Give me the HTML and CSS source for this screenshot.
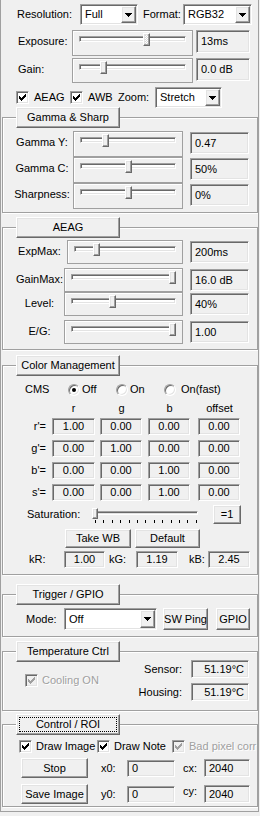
FILE: index.html
```html
<!DOCTYPE html>
<html lang="en">
<head>
<meta charset="utf-8">
<title>Camera Control</title>
<link rel="stylesheet" href="styles.css">
</head>
<body>
<svg class="defs" width="0" height="0" aria-hidden="true">
  <symbol id="chk" viewBox="0 0 7 7"><path d="M6 0h1v1h-1zM5 1h2v1h-2zM0 2h1v1h-1zM4 2h3v1h-3zM0 3h2v1h-2zM3 3h3v1h-3zM0 4h5v1h-5zM1 5h3v1h-3zM2 6h1v1h-1z"/></symbol>
  <symbol id="arr" viewBox="0 0 7 4"><path d="M0 0h7v1h-1v1h-1v1h-1v1h-1v-1h-1v-1h-1v-1h-1z"/></symbol>
</svg>
<div class="win">
  <div class="top">
    <div class="row r-res">
      <span class="w-res">Resolution:</span>
      <div class="combo cw58"><span class="ctext">Full</span><span class="cbtn"><svg width="7" height="4"><use href="#arr"/></svg></span></div>
      <span class="w-fmt">Format:</span>
      <div class="combo cw69"><span class="ctext">RGB32</span><span class="cbtn"><svg width="7" height="4"><use href="#arr"/></svg></span></div>
    </div>
    <div class="srow r-exp">
      <span class="slbl tl">Exposure:</span>
      <div class="frame tf h26"><div class="track"><span class="thumb focus" style="left:63px"></span></div></div>
      <div class="edit tv">13ms</div>
    </div>
    <div class="srow r-gain">
      <span class="slbl tl">Gain:</span>
      <div class="frame tf h25"><div class="track"><span class="thumb" style="left:20px"></span></div></div>
      <div class="edit tv">0.0 dB</div>
    </div>
    <div class="row r-chk">
      <label class="ck cw-aeag"><span class="box"><svg width="7" height="7"><use href="#chk"/></svg></span>AEAG</label>
      <label class="ck cw-awb"><span class="box"><svg width="7" height="7"><use href="#chk"/></svg></span>AWB</label>
      <span class="cw-zoom">Zoom:</span>
      <div class="combo cw67"><span class="ctext">Stretch</span><span class="cbtn"><svg width="7" height="4"><use href="#arr"/></svg></span></div>
    </div>
  </div>

  <fieldset class="grp g-gamma">
    <legend class="gbtn"><span class="gtext">Gamma &amp; Sharp</span></legend>
    <div class="srow grow">
      <span class="slbl gl">Gamma Y:</span>
      <div class="frame gf"><div class="track"><span class="thumb" style="left:21px"></span></div></div>
      <div class="edit gv">0.47</div>
    </div>
    <div class="srow grow">
      <span class="slbl gl">Gamma C:</span>
      <div class="frame gf"><div class="track"><span class="thumb" style="left:44px"></span></div></div>
      <div class="edit gv">50%</div>
    </div>
    <div class="srow grow">
      <span class="slbl gl">Sharpness:</span>
      <div class="frame gf"><div class="track"><span class="thumb" style="left:44px"></span></div></div>
      <div class="edit gv">0%</div>
    </div>
  </fieldset>

  <fieldset class="grp g-aeag">
    <legend class="gbtn"><span class="gtext">AEAG</span></legend>
    <div class="srow arow a1">
      <span class="slbl al">ExpMax:</span>
      <div class="frame af narrow"><div class="track"><span class="thumb" style="left:18px"></span></div></div>
      <div class="edit av">200ms</div>
    </div>
    <div class="srow arow a2">
      <span class="slbl al">GainMax:</span>
      <div class="frame af"><div class="track"><span class="thumb" style="left:97px"></span></div></div>
      <div class="edit av">16.0 dB</div>
    </div>
    <div class="srow arow a3">
      <span class="slbl al">Level:</span>
      <div class="frame af"><div class="track"><span class="thumb" style="left:37px"></span></div></div>
      <div class="edit av">40%</div>
    </div>
    <div class="srow arow a4">
      <span class="slbl al">E/G:</span>
      <div class="frame af"><div class="track"><span class="thumb" style="left:97px"></span></div></div>
      <div class="edit av">1.00</div>
    </div>
  </fieldset>

  <fieldset class="grp g-color">
    <legend class="gbtn"><span class="gtext">Color Management</span></legend>
    <div class="row cmsrow">
      <span class="w-cms">CMS</span>
      <label class="ri"><span class="rad on"></span>Off</label>
      <label class="ri"><span class="rad"></span>On</label>
      <label class="ri wide"><span class="rad"></span>On(fast)</label>
    </div>
    <div class="mgrid mhead"><span></span><span>r</span><span>g</span><span>b</span><span>offset</span></div>
    <div class="mgrid mrow"><span class="mlbl">r'=</span><span class="edit c m1">1.00</span><span class="edit c">0.00</span><span class="edit c">0.00</span><span class="edit c">0.00</span></div>
    <div class="mgrid mrow"><span class="mlbl">g'=</span><span class="edit c m1">0.00</span><span class="edit c">1.00</span><span class="edit c">0.00</span><span class="edit c">0.00</span></div>
    <div class="mgrid mrow"><span class="mlbl">b'=</span><span class="edit c m1">0.00</span><span class="edit c">0.00</span><span class="edit c">1.00</span><span class="edit c">0.00</span></div>
    <div class="mgrid mrow"><span class="mlbl">s'=</span><span class="edit c m1">0.00</span><span class="edit c">0.00</span><span class="edit c">1.00</span><span class="edit c">0.00</span></div>
    <div class="row satrow">
      <span class="w-sat">Saturation:</span>
      <div class="sat">
        <div class="track strack"><span class="thumb sthumb" style="left:-1px"></span></div>
        <div class="ticks"><i></i><i></i><i></i><i></i><i></i><i></i><i></i><i></i><i></i><i></i><i></i><i></i><i></i></div>
      </div>
      <button class="btn b-eq">=1</button>
    </div>
    <div class="row wbrow">
      <button class="btn b-take">Take WB</button>
      <button class="btn b-def">Default</button>
    </div>
    <div class="row krow">
      <span class="kl1">kR:</span><span class="edit c kb1">1.00</span>
      <span class="kl2">kG:</span><span class="edit c kb2">1.19</span>
      <span class="kl3">kB:</span><span class="edit c kb2">2.45</span>
    </div>
  </fieldset>

  <fieldset class="grp g-trig">
    <legend class="gbtn"><span class="gtext">Trigger / GPIO</span></legend>
    <div class="row trow">
      <span class="w-mode">Mode:</span>
      <div class="combo cw93"><span class="ctext">Off</span><span class="cbtn"><svg width="7" height="4"><use href="#arr"/></svg></span></div>
      <button class="btn b-ping">SW Ping</button>
      <button class="btn b-gpio">GPIO</button>
    </div>
  </fieldset>

  <fieldset class="grp g-temp">
    <legend class="gbtn"><span class="gtext">Temperature Ctrl</span></legend>
    <div class="temp">
      <label class="ck dis tcool"><span class="box"><svg width="7" height="7"><use href="#chk"/></svg></span>Cooling ON</label>
      <div class="tgrid">
        <span class="tl2">Sensor:</span><span class="edit r">51.19°C</span>
        <span class="tl2">Housing:</span><span class="edit r">51.19°C</span>
      </div>
    </div>
  </fieldset>

  <fieldset class="grp g-ctrl">
    <legend class="gbtn focused"><span class="gtext">Control / ROI</span></legend>
    <div class="row crow">
      <label class="ck cw-img"><span class="box"><svg width="7" height="7"><use href="#chk"/></svg></span>Draw Image</label>
      <label class="ck cw-note"><span class="box"><svg width="7" height="7"><use href="#chk"/></svg></span>Draw Note</label>
      <label class="ck dis"><span class="box"><svg width="7" height="7"><use href="#chk"/></svg></span>Bad pixel corr</label>
    </div>
    <div class="cgrid">
      <button class="btn">Stop</button>
      <span>x0:</span><span class="edit ex">0</span>
      <span>cx:</span><span class="edit ec">2040</span>
      <button class="btn">Save Image</button>
      <span>y0:</span><span class="edit ex">0</span>
      <span class="up">cy:</span><span class="edit ec">2040</span>
    </div>
  </fieldset>
</div>
</body>
</html>
```
FILE: styles.css
```css
* { box-sizing: border-box; }
html, body { margin: 0; padding: 0; }
body {
  background: #f0f0f0;
  font: 11px/13px "Liberation Sans", Arial, sans-serif;
  color: #000;
  width: 260px;
  height: 816px;
  overflow: hidden;
}
.defs { position: absolute; width: 0; height: 0; }
svg path { fill: currentColor; }
svg { display: block; }

.win {
  width: 259px;
  height: 812px;
  border: 1px solid #a0a0a0;
  border-top: 0;
  overflow: hidden;
}

/* generic */
.row { display: flex; align-items: center; white-space: nowrap; }
.srow { display: flex; align-items: flex-start; white-space: nowrap; }
.slbl { height: 22px; line-height: 22px; }

.btn, .gbtn, .cbtn, .thumb {
  background: #f0f0f0;
  border: 1px solid;
  border-color: #fff #696969 #696969 #fff;
  box-shadow: inset -1px -1px #a0a0a0, inset 1px 1px #e3e3e3;
}
.btn {
  font: inherit;
  color: #000;
  padding: 0;
  display: flex;
  align-items: center;
  justify-content: center;
}

.edit {
  display: flex;
  align-items: center;
  padding: 0 4px;
  background: #f0f0f0;
  border: 1px solid;
  border-color: #a0a0a0 #fff #fff #a0a0a0;
  box-shadow: inset 1px 1px #696969, inset -1px -1px #e3e3e3;
  white-space: nowrap;
}
.edit.c { justify-content: center; padding: 0; }
.edit.r { justify-content: flex-end; padding-right: 4px; }

/* combo box */
.combo {
  display: flex;
  height: 21px;
  padding: 1px;
  background: #fff;
  border: 1px solid;
  border-color: #a0a0a0 #fff #fff #a0a0a0;
  box-shadow: inset 1px 1px #696969, inset -1px -1px #e3e3e3;
}
.ctext { flex: 1; padding-left: 3px; line-height: 17px; }
.cbtn {
  width: 15px;
  display: flex;
  align-items: center;
  justify-content: center;
  color: #000;
}
.cw58 { width: 58px; }
.cw69 { width: 69px; }
.cw67 { width: 67px; }
.cw93 { width: 93px; height: 22px; }
.cw93 .ctext { line-height: 18px; }

/* checkbox */
.ck { display: flex; align-items: center; white-space: nowrap; }
.ck .box {
  width: 13px;
  height: 13px;
  margin-right: 5px;
  flex: none;
  display: flex;
  align-items: center;
  justify-content: center;
  background: #fff;
  color: #000;
  border: 1px solid;
  border-color: #a0a0a0 #fff #fff #a0a0a0;
  box-shadow: inset 1px 1px #696969, inset -1px -1px #e3e3e3;
}
.ck.dis { color: #a0a0a0; text-shadow: 1px 1px #fff; }
.ck.dis .box { background: #f0f0f0; color: #a0a0a0; }

/* radio */
.ri { display: flex; align-items: center; width: 48px; }
.rad {
  width: 12px;
  height: 12px;
  flex: none;
  margin-right: 2px;
  border-radius: 50%;
  background: #fff;
  border: 1px solid;
  border-color: #a0a0a0 #fff #fff #a0a0a0;
  box-shadow: inset 1px 1px #696969, inset -1px -1px #e3e3e3;
  display: flex;
  align-items: center;
  justify-content: center;
}
.rad.on::after {
  content: "";
  width: 4px;
  height: 4px;
  border-radius: 50%;
  background: #000;
}
.ri.wide .rad { margin-right: 5px; }

/* slider */
.frame {
  border: 1px solid #a0a0a0;
  box-shadow: inset 1px 1px #fff;
  padding: 5px 6px 0;
}
.track {
  position: relative;
  height: 6px;
  background: #fff;
  border: 1px solid;
  border-color: #a0a0a0 #fff #fff #a0a0a0;
  box-shadow: inset 1px 1px #696969, inset -1px -1px #e3e3e3;
}
.thumb {
  position: absolute;
  top: -4px;
  width: 7px;
  height: 13px;
}
.thumb.focus {
  background: repeating-conic-gradient(#fff 0 25%, #d8d8d8 0 50%) 0 0 / 2px 2px;
}

/* top section */
.top { padding-top: 4px; }
.r-res { height: 21px; padding-left: 16px; }
.w-res { width: 63px; }
.w-fmt { width: 40px; margin-left: 5px; }
.r-exp { margin-top: 5px; padding-left: 17px; }
.r-gain { margin-top: 2px; padding-left: 17px; }
.tl { width: 54px; }
.tf { width: 121px; }
.h26 { height: 26px; }
.h25 { height: 25px; }
.tv { width: 54px; height: 23px; margin-left: 3px; }
.r-chk { margin-top: 4px; height: 21px; padding-left: 15px; }
.cw-aeag { width: 54px; }
.cw-awb { width: 48px; }
.cw-zoom { width: 37px; }

/* group boxes */
.grp {
  margin: 4px 0 0 1px;
  width: 256px;
  min-width: 0;
  padding: 0;
  border: 1px solid #a0a0a0;
  box-shadow: inset 1px 1px #fff, 1px 1px #fff;
}
.gbtn {
  float: none;
  margin: 0 0 0 13px;
  padding: 0;
  width: 104px;
  height: 21px;
  text-align: left;
}
.gtext {
  display: block;
  width: 100%;
  line-height: 19px;
  text-align: center;
  white-space: nowrap;
}
.gbtn.focused .gtext {
  outline: 1px dotted #000;
  outline-offset: -3px;
}

/* gamma */
.g-gamma { margin-top: -1px; padding-bottom: 3px; }
.grow { height: 26px; }
.gbtn + .grow { margin-top: 3px; }
.gl { width: 70px; padding-left: 8px; text-align: center; }
.gf { width: 110px; height: 26px; }
.gv { width: 59px; height: 22px; margin: 1px 0 0 7px; }

/* aeag */
.g-aeag { margin-top: 4px; padding-bottom: 5px; }
.arow { height: 24px; }
.a1 { margin-top: 2px; }
.a2 { margin-top: 4px; }
.a4 { margin-top: 4px; }
.al { width: 61px; padding-left: 12px; text-align: center; }
.af { width: 119px; height: 24px; }
.af.narrow { width: 116px; margin-left: 3px; }
.av { width: 59px; height: 22px; margin: 1px 0 0 7px; }

/* color management */
.g-color { margin-top: 5px; padding-bottom: 6px; }
.cmsrow { margin-top: 7px; height: 13px; padding-left: 22px; }
.w-cms { width: 43px; }
.mgrid {
  display: grid;
  grid-template-columns: 49px 48px 48px 50px 43px;
  height: 17px;
}
.mgrid > span { width: 43px; }
.mgrid .mlbl { width: auto; text-align: right; padding-right: 6px; line-height: 17px; }
.mhead { margin-top: 6px; height: 13px; text-align: center; }
.mhead + .mrow { margin-top: 3px; }
.mrow { margin-top: 5px; }
.mgrid .edit.c { width: 42px; }
.mgrid .edit.m1 { width: 43px; }

.satrow { margin-top: 4px; height: 19px; padding-left: 24px; }
.w-sat { width: 65px; }
.sat { width: 106px; align-self: stretch; padding-top: 6px; }
.strack { height: 4px; }
.sthumb { width: 6px; height: 11px; top: -4px; }
.ticks {
  display: flex;
  justify-content: space-between;
  margin: 5px 1px 0 3px;
  height: 3px;
}
.ticks i { width: 1px; height: 3px; background: #000; }
.b-eq { width: 28px; height: 19px; margin-left: 15px; }

.wbrow { margin-top: 5px; height: 19px; padding-left: 62px; }
.b-take { width: 66px; height: 19px; }
.b-def { width: 65px; height: 19px; margin-left: 4px; }

.krow { margin-top: 3px; height: 17px; padding-left: 26px; }
.kl1 { width: 35px; }
.kl2 { width: 27px; margin-left: 4px; }
.kl3 { width: 19px; margin-left: 11px; }
.kb1 { width: 41px; height: 17px; }
.kb2 { width: 42px; height: 17px; }

/* trigger */
.g-trig { margin-top: 9px; padding-bottom: 6px; }
.trow { margin-top: 3px; height: 22px; padding-left: 23px; }
.w-mode { width: 38px; }
.b-ping { width: 45px; height: 22px; margin-left: 6px; }
.b-gpio { width: 34px; height: 22px; margin-left: 8px; }

/* temperature */
.g-temp { margin-top: 4px; }
.temp {
  display: flex;
  align-items: center;
  margin-top: -2px;
  padding-bottom: 9px;
}
.tcool { margin-left: 22px; }
.tcool .box { margin-right: 4px; }
.tgrid {
  margin-left: auto;
  margin-right: 8px;
  display: grid;
  grid-template-columns: auto 58px;
  grid-auto-rows: 18px;
  column-gap: 9px;
  row-gap: 5px;
  align-items: center;
}
.tl2 { text-align: right; }
.tgrid .edit { height: 18px; }

/* control */
.g-ctrl { margin-top: 3px; padding-bottom: 2px; }
.crow { margin-top: 5px; height: 13px; padding-left: 16px; overflow: hidden; }
.crow .box { margin-right: 4px; }
.cw-img { width: 78px; }
.cw-note { width: 75px; }
.cgrid {
  margin-top: 5px;
  padding-left: 18px;
  display: grid;
  grid-template-columns: 80px 26px 56px 21px 46px;
  grid-template-rows: 20px 20px;
  row-gap: 6px;
  align-items: center;
}
.cgrid .btn { width: 67px; height: 20px; }
.cgrid .edit { height: 17px; }
.cgrid .ex { width: 48px; }
.cgrid .ec { width: 46px; height: 18px; }
.cgrid .up { margin-top: -5px; }
```
